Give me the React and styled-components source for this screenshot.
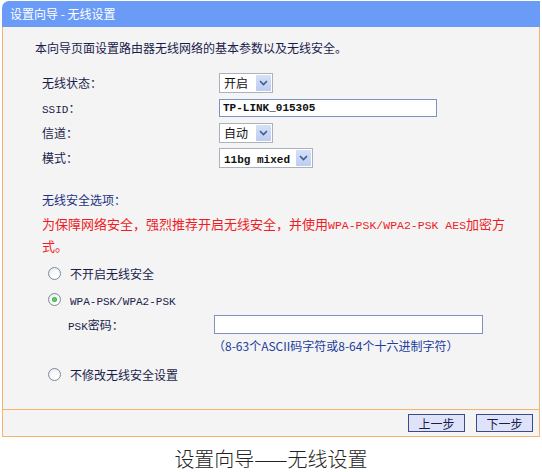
import React from 'react';
import styled, { createGlobalStyle } from 'styled-components';

const GlobalStyle = createGlobalStyle`
  body {
    margin: 0;
    background: #ffffff;
    font-family: "Noto Sans CJK SC", "Noto Sans", sans-serif;
    font-size: 12px;
    color: #1a1d4a;
  }
`;

const Page = styled.div`
  width: 542px;
  padding-top: 1px;
`;

const Frame = styled.div`
  width: 538px;
  margin-left: 2px;
`;

const Header = styled.div`
  height: 26px;
  line-height: 26px;
  padding-left: 8px;
  background: #6a9bf6;
  border-top-left-radius: 7px;
  color: #ffffff;
  font-size: 12px;
  white-space: pre;
`;

const Body = styled.div`
  background: #f4f4f5;
  border-left: 1px solid #f6b36f;
  border-right: 1px solid #f6b36f;
  padding: 11px 0 22px;
`;

const Intro = styled.div`
  padding-left: 32px;
  line-height: 20px;
`;

const Form = styled.div`
  padding-left: 39px;
  margin-top: 12px;
`;

const Row = styled.div`
  display: flex;
  align-items: center;
  height: ${p => p.$h || 25}px;
`;

const Label = styled.div`
  width: ${p => p.$w || 177}px;
  flex: none;
`;

const Mono = styled.span`
  font-family: "Liberation Mono", monospace;
  font-size: ${p => p.$size || 11}px;
  font-weight: ${p => (p.$bold ? 700 : 400)};
`;

const Select = styled.div`
  display: flex;
  align-items: center;
  justify-content: space-between;
  box-sizing: border-box;
  width: ${p => p.$w}px;
  height: 20px;
  padding: 0 1px 0 4px;
  background: #ffffff;
  border: 1px solid #a9b2bd;
  color: #111;
`;

const Arrow = styled.span`
  display: flex;
  align-items: center;
  justify-content: center;
  width: 15px;
  height: 16px;
  background: linear-gradient(#d6e0f8, #bccdf2);
  border-radius: 1px;
`;

const Input = styled.div`
  box-sizing: border-box;
  width: ${p => p.$w}px;
  height: ${p => p.$h || 18}px;
  padding-left: 3px;
  display: flex;
  align-items: center;
  background: #ffffff;
  border: 1px solid #7c93bf;
  color: #111;
`;

const Section = styled.div`
  line-height: 20px;
  margin-top: 20px;
  color: #1d3180;
`;

const Warning = styled.div`
  margin-top: 4px;
  line-height: 20px;
  font-size: 13px;
  color: #ee1c24;
`;

const Radios = styled.div`
  margin-top: 4px;
`;

const RadioRow = styled.div`
  display: flex;
  align-items: center;
  height: 26px;
  padding-left: 6px;
  margin-top: ${p => p.$gap || 0}px;
`;

const Circle = styled.span`
  position: relative;
  box-sizing: border-box;
  width: 13px;
  height: 13px;
  margin-right: 9px;
  border-radius: 50%;
  border: 1px solid #7d8b99;
  background: radial-gradient(circle at 60% 65%, #ffffff 30%, #dde2ea 100%);

  &::after {
    content: '';
    display: ${p => (p.$on ? 'block' : 'none')};
    position: absolute;
    left: 3px;
    top: 3px;
    width: 5px;
    height: 5px;
    border-radius: 50%;
    background: radial-gradient(circle, #5fd35f 20%, #1f9a2c 100%);
  }
`;

const Sub = styled.div`
  padding-left: 26px;
`;

const Hint = styled.div`
  height: 20px;
  line-height: 20px;
  padding-left: 145px;
  color: #1d3c9c;
`;

const Footer = styled.div`
  display: flex;
  justify-content: flex-end;
  align-items: center;
  gap: 11px;
  height: 26px;
  padding-right: 6px;
  background: #f4f4f5;
  border: 1px solid #f6b36f;
`;

const Button = styled.div`
  box-sizing: border-box;
  width: 57px;
  height: 18px;
  display: flex;
  align-items: center;
  justify-content: center;
  background: #dfe3fa;
  border: 1px solid #3d4a86;
  color: #1a1d4a;
  font-size: 12px;
`;

const Caption = styled.div`
  margin-top: 8px;
  line-height: 28px;
  text-align: center;
  font-size: 20px;
  font-weight: 300;
  color: #222;
`;

const Chevron = () => (
  <svg width="9" height="6" viewBox="0 0 9 6">
    <path d="M1 1 L4.5 4.5 L8 1" fill="none" stroke="#405b8c" strokeWidth="1.6" />
  </svg>
);

const Dropdown = ({ w, children }) => (
  <Select $w={w}>
    <span>{children}</span>
    <Arrow><Chevron /></Arrow>
  </Select>
);

const Radio = ({ on, gap, children }) => (
  <RadioRow $gap={gap}>
    <Circle $on={on} />
    <span>{children}</span>
  </RadioRow>
);

export default function App() {
  return (
    <Page>
      <GlobalStyle />
      <Frame>
        <Header>设置向导 - 无线设置</Header>
        <Body>
          <Intro>本向导页面设置路由器无线网络的基本参数以及无线安全。</Intro>
          <Form>
            <Row>
              <Label>无线状态：</Label>
              <Dropdown w={54}>开启</Dropdown>
            </Row>
            <Row>
              <Label><Mono>SSID</Mono>：</Label>
              <Input $w={218}><Mono $bold>TP-LINK_015305</Mono></Input>
            </Row>
            <Row>
              <Label>信道：</Label>
              <Dropdown w={54}>自动</Dropdown>
            </Row>
            <Row>
              <Label>模式：</Label>
              <Dropdown w={94}><Mono $bold>11bg mixed</Mono></Dropdown>
            </Row>
            <Section>无线安全选项：</Section>
            <Warning>
              为保障网络安全，强烈推荐开启无线安全，并使用<Mono $size={11.5}>WPA-PSK/WPA2-PSK AES</Mono>加密方
              <br />
              式。
            </Warning>
            <Radios>
              <Radio>不开启无线安全</Radio>
              <Radio on><Mono>WPA-PSK/WPA2-PSK</Mono></Radio>
              <Sub>
                <Row $h={24}>
                  <Label $w={146}><Mono>PSK</Mono>密码：</Label>
                  <Input $w={269} $h={19} />
                </Row>
                <Hint>（8-63个ASCII码字符或8-64个十六进制字符）</Hint>
              </Sub>
              <Radio gap={5}>不修改无线安全设置</Radio>
            </Radios>
          </Form>
        </Body>
        <Footer>
          <Button>上一步</Button>
          <Button>下一步</Button>
        </Footer>
      </Frame>
      <Caption>设置向导——无线设置</Caption>
    </Page>
  );
}
